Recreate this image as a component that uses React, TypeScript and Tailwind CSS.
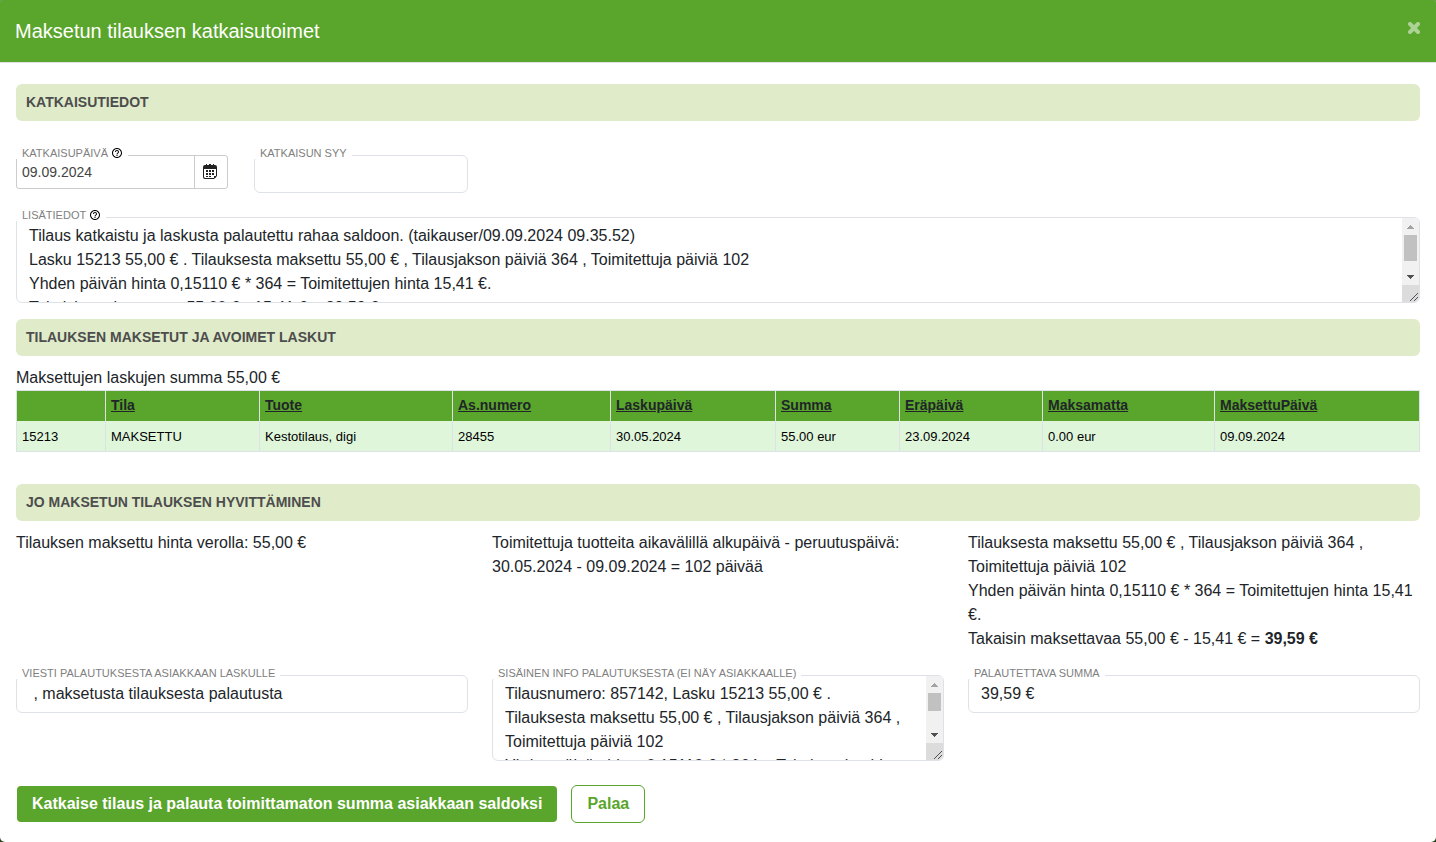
import React, { useState } from 'react';
import { MdHelpOutline } from 'react-icons/md';

const columns = [
  { label: '', width: 'w-[89px]' },
  { label: 'Tila', width: 'w-[154px]' },
  { label: 'Tuote', width: 'w-[193px]' },
  { label: 'As.numero', width: 'w-[158px]' },
  { label: 'Laskupäivä', width: 'w-[165px]' },
  { label: 'Summa', width: 'w-[124px]' },
  { label: 'Eräpäivä', width: 'w-[143px]' },
  { label: 'Maksamatta', width: 'w-[172px]' },
  { label: 'MaksettuPäivä', width: '' },
];

const invoices = [
  ['15213', 'MAKSETTU', 'Kestotilaus, digi', '28455', '30.05.2024', '55.00 eur', '23.09.2024', '0.00 eur', '09.09.2024'],
];

const detailsText = `Tilaus katkaistu ja laskusta palautettu rahaa saldoon. (taikauser/09.09.2024 09.35.52)
Lasku 15213 55,00 € . Tilauksesta maksettu 55,00 € , Tilausjakson päiviä 364 , Toimitettuja päiviä 102
Yhden päivän hinta 0,15110 € * 364 = Toimitettujen hinta 15,41 €.
Takaisin maksettavaa 55,00 € - 15,41 € = 39,59 €`;

const internalText = `Tilausnumero: 857142, Lasku 15213 55,00 € .
Tilauksesta maksettu 55,00 € , Tilausjakson päiviä 364 , Toimitettuja päiviä 102
Yhden päivän hinta 0,15110 € * 364 = Toimitettujen hinta 15,41 €.
Takaisin maksettavaa 55,00 € - 15,41 € = 39,59 €`;

function SectionTitle({ children }: { children: React.ReactNode }) {
  return (
    <h2 className="rounded-md bg-[#dfebc9] px-2.5 py-2 text-sm leading-[21px] font-bold text-[#4d4d4d] uppercase">
      {children}
    </h2>
  );
}

function Field({
  id,
  label,
  help = false,
  children,
}: {
  id: string;
  label: string;
  help?: boolean;
  children: React.ReactNode;
}) {
  return (
    <div className="relative">
      {children}
      {/* Label sits over the top border */}
      <label
        htmlFor={id}
        className="absolute -top-2 left-0 flex items-center gap-[3px] bg-white pr-[5px] pl-1.5 text-[11px] leading-3 text-[#808080] uppercase"
      >
        {label}
        {help && <MdHelpOutline className="size-3 text-black" />}
      </label>
    </div>
  );
}

const inputClass =
  'block h-[38px] w-full rounded-md border border-[#dee2e6] bg-white px-3 text-base text-[#212529] outline-none';

function TextArea({
  id,
  value,
  onChange,
  thumb,
}: {
  id: string;
  value: string;
  onChange: (value: string) => void;
  thumb: string;
}) {
  return (
    <div className="relative h-[86px] overflow-hidden rounded-md border border-[#dee2e6] bg-white">
      <textarea
        id={id}
        value={value}
        onChange={(e) => onChange(e.target.value)}
        className="block h-full w-full resize-none overflow-y-auto py-1.5 pr-[29px] pl-3 text-base leading-6 text-[#212529] outline-none"
      />
      <div className="pointer-events-none absolute inset-y-0 right-0 flex w-[17px] flex-col bg-[#f1f1f1]">
        <span className="flex h-[17px] items-center justify-center">
          <svg viewBox="0 0 7 4" className="h-1 w-[7px]" fill="#a3a3a3" aria-hidden="true">
            <path d="M3 0h1v1h1v1h1v1h1v1H0V3h1V2h1V1h1z" />
          </svg>
        </span>
        <span className={`mx-0.5 bg-[#c1c1c1] ${thumb}`} />
        <span className="mt-auto flex h-[17px] items-center justify-center">
          <svg viewBox="0 0 7 4" className="h-1 w-[7px]" fill="#505050" aria-hidden="true">
            <path d="M0 0h7v1H6v1H5v1H4v1H3V3H2V2H1V1H0z" />
          </svg>
        </span>
        <span className="flex h-[17px] items-end justify-end bg-[#dcdcdc] p-px">
          <svg viewBox="0 0 8 8" className="size-2" stroke="#505050" aria-hidden="true">
            <path d="M0 8L8 0M4 8L8 4" />
          </svg>
        </span>
      </div>
    </div>
  );
}

function CalendarIcon() {
  return (
    <svg viewBox="0 0 14 16" className="h-4 w-3.5" fill="#222" aria-hidden="true">
      <path
        fillRule="evenodd"
        d="M2 1h1V0h1v1h2V0h2v1h2V0h1v1h1a2 2 0 0 1 2 2v9l-3 3H2a2 2 0 0 1-2-2V3a2 2 0 0 1 2-2zM1 5v8l1 1h9l2-2V5z"
      />
      <path d="M6 6h2v2H6zM9 6h2v2H9zM3 6h2v2H3zM3 9h2v2H3zM6 9h2v2H6zM9 9h2v2H9zM3 12h2v1H3zM6 12h2v1H6zM11 12h2v1l-1 1h-1z" />
    </svg>
  );
}

export default function App() {
  const [date, setDate] = useState('09.09.2024');
  const [reason, setReason] = useState('');
  const [details, setDetails] = useState(detailsText);
  const [message, setMessage] = useState('\u00a0, maksetusta tilauksesta palautusta');
  const [internalInfo, setInternalInfo] = useState(internalText);
  const [amount, setAmount] = useState('39,59 €');

  return (
    <div className="bg-[#2c401f] font-['Liberation_Sans',Arial,sans-serif] text-base leading-6 text-[#212529]">
      <div className="min-h-screen overflow-hidden rounded-t-[2px] rounded-b-[5px] bg-white">
        <header className="flex h-[63px] items-center justify-between border-b border-[#dee2e6] bg-[#5aa52c] pr-4 pl-[15px]">
          <h1 className="text-xl text-white">Maksetun tilauksen katkaisutoimet</h1>
          <button type="button" aria-label="Sulje" className="-mt-1.5 text-white opacity-50">
            <svg viewBox="0 0 12 12" className="size-3" stroke="currentColor" strokeWidth="4" aria-hidden="true">
              <path d="M2 2l8 8M10 2L2 10" strokeLinecap="round" />
            </svg>
          </button>
        </header>

        <main className="px-4 pt-[21px]">
          <SectionTitle>Katkaisutiedot</SectionTitle>

          <div className="mt-[34px] grid grid-cols-6 gap-6">
            <Field id="date" label="Katkaisupäivä" help>
              <div className="mr-0.5 flex h-[34px] rounded-[3px] border border-[#ccc]">
                <input
                  id="date"
                  value={date}
                  onChange={(e) => setDate(e.target.value)}
                  className="w-full min-w-0 px-[5px] text-sm text-[#444] outline-none"
                />
                <button
                  type="button"
                  aria-label="Avaa kalenteri"
                  className="flex w-[33px] shrink-0 items-center justify-center border-l border-[#ccc] pr-0.5"
                >
                  <CalendarIcon />
                </button>
              </div>
            </Field>
            <Field id="reason" label="Katkaisun syy">
              <input id="reason" value={reason} onChange={(e) => setReason(e.target.value)} className={inputClass} />
            </Field>
          </div>

          <div className="mt-6">
            <Field id="details" label="Lisätiedot" help>
              <TextArea id="details" value={details} onChange={setDetails} thumb="h-[26px]" />
            </Field>
          </div>

          <div className="mt-4">
            <SectionTitle>Tilauksen maksetut ja avoimet laskut</SectionTitle>
          </div>

          <p className="mt-2.5">Maksettujen laskujen summa 55,00 €</p>
          <table className="w-full table-fixed border-collapse border border-[#dee2e6] text-left leading-5">
            <thead>
              <tr className="bg-[#5aa52c] text-sm">
                {columns.map((column) => (
                  <th key={column.label} className={`h-[30px] border-x border-[#dee2e6] px-[5px] pb-0.5 ${column.width}`}>
                    {column.label && (
                      <a href="#" className="text-[#212529] underline">
                        {column.label}
                      </a>
                    )}
                  </th>
                ))}
              </tr>
            </thead>
            <tbody>
              {invoices.map((invoice) => (
                <tr key={invoice[0]} className="bg-[#dff6db] text-[13px] text-black">
                  {invoice.map((value, i) => (
                    <td key={i} className="h-[31px] border-x border-[#dee2e6] px-[5px] pt-0.5">
                      {value}
                    </td>
                  ))}
                </tr>
              ))}
            </tbody>
          </table>

          <div className="mt-8">
            <SectionTitle>Jo maksetun tilauksen hyvittäminen</SectionTitle>
          </div>

          <div className="mt-2.5 grid grid-cols-3 gap-6">
            <p>Tilauksen maksettu hinta verolla: 55,00 €</p>
            <p>
              Toimitettuja tuotteita aikavälillä alkupäivä - peruutuspäivä: 30.05.2024 - 09.09.2024 = 102 päivää
            </p>
            <p>
              Tilauksesta maksettu 55,00 € , Tilausjakson päiviä 364 , Toimitettuja päiviä 102
              <br />
              Yhden päivän hinta 0,15110 € * 364 = Toimitettujen hinta 15,41 €.
              <br />
              Takaisin maksettavaa 55,00 € - 15,41 € = <b>39,59 €</b>
            </p>
          </div>

          <div className="mt-6 grid grid-cols-3 gap-6">
            <Field id="message" label="Viesti palautuksesta asiakkaan laskulle">
              <input id="message" value={message} onChange={(e) => setMessage(e.target.value)} className={inputClass} />
            </Field>
            <Field id="internal" label="Sisäinen info palautuksesta (ei näy asiakkaalle)">
              <TextArea id="internal" value={internalInfo} onChange={setInternalInfo} thumb="h-[18px]" />
            </Field>
            <Field id="amount" label="Palautettava summa">
              <input id="amount" value={amount} onChange={(e) => setAmount(e.target.value)} className={inputClass} />
            </Field>
          </div>

          <div className="mt-6 flex items-center gap-3.5 px-px pb-4 font-bold">
            <button type="button" className="h-9 rounded-sm bg-[#5aa52c] px-[15px] text-white">
              Katkaise tilaus ja palauta toimittamaton summa asiakkaan saldoksi
            </button>
            <button type="button" className="h-[38px] rounded-md border border-[#5aa52c] px-[15px] text-[#5aa52c]">
              Palaa
            </button>
          </div>
        </main>
      </div>
    </div>
  );
}
